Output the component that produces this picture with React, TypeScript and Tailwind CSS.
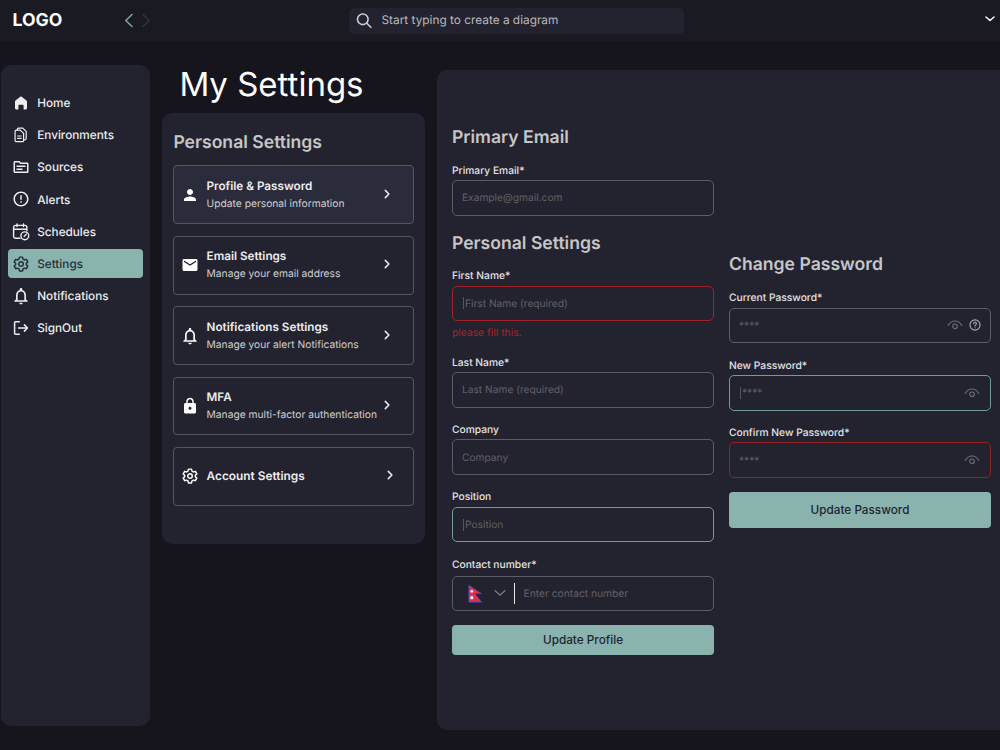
import type { ReactNode } from "react";
import {
  MdEmail,
  MdErrorOutline,
  MdLock,
  MdOutlineNotifications,
  MdOutlineTopic,
  MdPerson,
} from "react-icons/md";

function HomeIcon() {
  return (
    <svg viewBox="0 0 16 16" className="size-4" fill="currentColor">
      <path d="M8 1.2 13.2 5.2a2 2 0 0 1 .8 1.6v6.5a1.1 1.1 0 0 1-1.1 1.1h-2.3V10.6a.9.9 0 0 0-.9-.9H6.3a.9.9 0 0 0-.9.9v3.8H3.1a1.1 1.1 0 0 1-1.1-1.1V6.8a2 2 0 0 1 .8-1.6z" />
    </svg>
  );
}

function DocumentsIcon() {
  return (
    <svg viewBox="0 0 16 16" className="size-4" fill="none" stroke="currentColor" strokeWidth="1.2" strokeLinecap="round" strokeLinejoin="round">
      <path d="M3.3 3.1H7.2L10.6 6.4v7.1a1.2 1.2 0 0 1-1.2 1.2H3.3a1.2 1.2 0 0 1-1.2-1.2V4.3a1.2 1.2 0 0 1 1.2-1.2z" />
      <path d="M4.3 3V2.3A1.2 1.2 0 0 1 5.5 1.1h4.3l3.4 3.3v7.2a1.2 1.2 0 0 1-1.2 1.2h-1.2" />
      <path d="M4.6 9h3.5M4.6 11.4h3.5" />
    </svg>
  );
}

function ScheduleIcon() {
  return (
    <svg viewBox="0 0 18 18" className="size-[18px] shrink-0" fill="none" stroke="currentColor" strokeWidth="1.4" strokeLinecap="round" strokeLinejoin="round">
      <path d="M8 15.3H3.6A2 2 0 0 1 1.6 13.3V4.4a2 2 0 0 1 2-2h9.3a2 2 0 0 1 2 2v3.3M1.6 6.3h13.3M5 1v2.6M11.5 1v2.6" />
      <circle cx="12.8" cy="12.8" r="3.9" />
      <path d="m12.2 13.4 2.1-2.3" />
    </svg>
  );
}

function GearIcon() {
  return (
    <svg viewBox="0 0 24 24" className="size-4" fill="none" stroke="currentColor" strokeWidth="2.2" strokeLinejoin="round">
      <path d="M9.7 1.7h4.6l.7 3 2 1.2 3-.9 2.2 3.9-2.2 2.1v2.1l2.2 2.1-2.2 3.9-3-.9-2 1.2-.7 3H9.7l-.7-3-2-1.2-3 .9-2.2-3.9L4 13.1V11L1.8 8.9 4 5l3 .9 2-1.2z" />
      <circle cx="12" cy="12" r="3.4" />
    </svg>
  );
}

function SignOutIcon() {
  return (
    <svg viewBox="0 0 16 16" className="size-4" fill="none" stroke="currentColor" strokeWidth="1.5" strokeLinecap="round" strokeLinejoin="round">
      <path d="M6.3 1.7H2.6a1 1 0 0 0-1 1v10.6a1 1 0 0 0 1 1h3.7M5.5 8h9M11.4 4.9 14.5 8l-3.1 3.1" />
    </svg>
  );
}

function EyeIcon() {
  return (
    <svg viewBox="0 0 16 12" className="h-3 w-4" fill="none" stroke="#6c6c72" strokeWidth="1.2" strokeLinecap="round">
      <path d="M1.300 6.400C2.800 3.600 5.200 2 8 2s5.200 1.600 6.700 4.400" />
      <circle cx="8" cy="7.300" r="2.300" />
    </svg>
  );
}

function HelpIcon() {
  return (
    <svg viewBox="0 0 12 12" className="size-3" fill="none" stroke="#a9a9b4" strokeWidth="1.1" strokeLinecap="round">
      <circle cx="6" cy="6" r="5.1" />
      <path d="M4.6 4.7a1.4 1.4 0 1 1 2.1 1.2c-.5.3-.7.5-.7 1M6 8.7v.01" />
    </svg>
  );
}

function NepalFlag() {
  return (
    <svg viewBox="0 0 15 19" className="h-[19px] w-[15px]">
      <path d="M.7.9 14 9.8H7.3L14 18.3H.7z" fill="#e0304e" stroke="#2c3f98" strokeWidth="0.9" />
      <circle cx="3.8" cy="7.3" r="1.4" fill="#fff" />
      <circle cx="3.8" cy="13.7" r="1.6" fill="#fff" />
    </svg>
  );
}

function Chevron({ d, className }: { d: string; className: string }) {
  return (
    <svg viewBox="0 0 16 16" className={`shrink-0 ${className}`} fill="none" stroke="currentColor" strokeWidth="1.5" strokeLinecap="round" strokeLinejoin="round">
      <path d={d} />
    </svg>
  );
}

const navItems: { label: string; icon: ReactNode; active?: boolean }[] = [
  { label: "Home", icon: <HomeIcon /> },
  { label: "Environments", icon: <DocumentsIcon /> },
  { label: "Sources", icon: <MdOutlineTopic className="size-[18px] shrink-0" /> },
  { label: "Alerts", icon: <MdErrorOutline className="size-[18px] shrink-0" /> },
  { label: "Schedules", icon: <ScheduleIcon /> },
  { label: "Settings", icon: <GearIcon />, active: true },
  { label: "Notifications", icon: <MdOutlineNotifications className="size-[20px] shrink-0" /> },
  { label: "SignOut", icon: <SignOutIcon /> },
];

const cards: { title: string; text?: string; icon: ReactNode; active?: boolean }[] = [
  { title: "Profile & Password", text: "Update personal information", icon: <MdPerson className="size-[18px]" />, active: true },
  { title: "Email Settings", text: "Manage your email address", icon: <MdEmail className="size-[18px]" /> },
  { title: "Notifications Settings", text: "Manage your alert Notifications", icon: <MdOutlineNotifications className="size-[20px] shrink-0" /> },
  { title: "MFA", text: "Manage multi-factor authentication", icon: <MdLock className="size-[18px]" /> },
  { title: "Account Settings", icon: <GearIcon /> },
];

function Heading({ children }: { children: ReactNode }) {
  return <h2 className="h-[22px] pt-px text-[17.6px] leading-[22px] font-semibold text-[#c6c6c8]">{children}</h2>;
}

function Field({
  label,
  placeholder,
  border = "border-[#5d5d68]",
  caret = false,
  children,
}: {
  label: string;
  placeholder: string;
  border?: string;
  caret?: boolean;
  children?: ReactNode;
}) {
  return (
    <div className="flex flex-col">
      <span className="mb-[1.9px] h-4 pt-[0.5px] text-[10.25px] leading-4 font-medium text-[#e4e4e6]">{label}</span>
      <div className={`flex h-[35.5px] items-center rounded-[5px] border px-[9px] ${border}`}>
        {caret && <span className="mr-px ml-px h-3 w-px bg-[#55555b]" />}
        <span className="flex-1 pt-[2px] text-[10.2px] text-[#606065]">{placeholder}</span>
        {children}
      </div>
    </div>
  );
}

export default function App() {
  return (
    <div className="flex h-[750px] w-[1000px] flex-col overflow-hidden bg-[#16141d] font-['Inter',sans-serif] [text-rendering:geometricPrecision]">
      <header className="flex h-[41px] shrink-0 items-center bg-[#1a1a23]">
        <div className="w-[121px] pt-[2px] pl-[12.5px] text-[17.6px] font-bold text-white">LOGO</div>
        <Chevron d="M11 1.500 4.800 7.500l6.200 6" className="size-4 text-[#79aaa5]" />
        <Chevron d="M5 1.500 11.200 7.500l-6.200 6" className="ml-px size-4 text-[#33333f]" />
        <div className="ml-[195px] flex h-[26px] w-[335px] items-center rounded-[5px] bg-[#23232f] pl-[7px]">
          <svg viewBox="0 0 16 16" className="size-4" fill="none" stroke="#cfcfd1" strokeWidth="1.6" strokeLinecap="round">
            <circle cx="6.8" cy="6.3" r="5.3" />
            <path d="m10.8 10.3 4 4" />
          </svg>
          <span className="ml-[9.5px] pt-px text-[11.85px] text-[#b9b9bb]">Start typing to create a diagram</span>
        </div>
        <Chevron d="M4 4 8 7.500l4-3.500" className="mr-[2.5px] ml-auto size-4 text-white" />
      </header>

      <div className="flex flex-1">
        <nav className="mt-[23.7px] ml-px flex h-[661px] w-[149px] shrink-0 flex-col gap-[3.2px] rounded-[10px] bg-[#23232f] px-[7px] pt-[23.6px]">
          {navItems.map((item) => (
            <div
              key={item.label}
              className={`flex h-[29px] shrink-0 items-center rounded-[4px] pl-[5px] text-[11.75px] font-medium ${
                item.active ? "bg-[#8ab3ae] text-[#22303a]" : "text-[#ededef]"
              }`}
            >
              <span className="flex w-4 items-center justify-center">{item.icon}</span>
              <span className="ml-[8.2px] pt-[2px]">{item.label}</span>
            </div>
          ))}
        </nav>

        <section className="ml-3 flex w-[263px] shrink-0 flex-col">
          <h1 className="mt-[22px] ml-[17.4px] h-[50px] text-[33px] leading-[42px] whitespace-nowrap text-white">My Settings</h1>
          <div className="flex h-[430.5px] flex-col rounded-[10px] bg-[#23232f] px-[11.4px] pt-[18.4px]">
            <Heading>Personal Settings</Heading>
            <div className="mt-[12.1px] flex flex-col gap-[11.7px]">
              {cards.map((card) => (
                <div
                  key={card.title}
                  className={`flex h-[58.7px] items-center rounded-[4px] border border-[#55555b] pl-[6.6px] ${card.active ? "bg-[#2b2c3b]" : ""}`}
                >
                  <span className="flex w-[18px] justify-center text-white">{card.icon}</span>
                  <div className="ml-[7.6px] w-[172px] whitespace-nowrap">
                    <div className={`leading-[18px] font-semibold text-[#ededef] ${card.text ? "text-[11.7px]" : "text-[11.85px]"}`}>
                      {card.title}
                    </div>
                    {card.text && <div className="text-[10.25px] leading-[18px] text-[#cfcfd2]">{card.text}</div>}
                  </div>
                  <Chevron
                    d="M6.300 3.400 9.900 7 6.300 10.600"
                    className={`size-4 text-[#ededef] ${card.text ? "" : "ml-[3.7px]"}`}
                  />
                </div>
              ))}
            </div>
          </div>
        </section>

        <main className="mt-[28.5px] ml-3 flex h-[660.5px] w-[575px] shrink-0 rounded-[10px] bg-[#23232f] pl-[15px]">
          <div className="flex w-[262px] flex-col pt-[56.5px]">
            <Heading>Primary Email</Heading>
            <div className="mt-[14.3px]">
              <Field label="Primary Email*" placeholder="Example@gmail.com" />
            </div>
            <div className="mt-[16px]">
              <Heading>Personal Settings</Heading>
            </div>
            <div className="mt-[14px]">
              <Field label="First Name*" placeholder="First Name (required)" border="border-[#a32227]" caret />
            </div>
            <span className="mt-[4px] h-4 text-[10.3px] leading-4 text-[#ab2127]">please fill this.</span>
            <div className="mt-[13.1px] flex flex-col gap-[14px]">
              <Field label="Last Name*" placeholder="Last Name (required)" />
              <Field label="Company" placeholder="Company" />
              <Field label="Position" placeholder="Position" border="border-[#6f9c98]" caret />
              <div className="flex flex-col">
                <span className="mb-[3.2px] h-4 pt-[0.5px] text-[10.25px] leading-4 font-medium text-[#e4e4e6]">Contact number*</span>
                <div className="flex h-[35.5px] items-center rounded-[5px] border border-[#5d5d68] pl-[14.5px]">
                  <NepalFlag />
                  <Chevron d="M3 5.800 8 10l5-4.200" className="ml-[9.5px] size-4 text-[#77777c]" />
                  <span className="ml-[5.5px] h-[21px] w-px bg-[#e4e4e6]" />
                  <span className="ml-[9px] pt-[2px] text-[10.25px] text-[#606065]">Enter contact number</span>
                </div>
              </div>
            </div>
            <button className="mt-[14.2px] h-[29.5px] shrink-0 rounded-[4px] bg-[#8ab3ae] pt-[1.5px] text-[11.75px] font-medium text-[#1d2530]">
              Update Profile
            </button>
          </div>

          <div className="ml-[15px] flex w-[262px] flex-col pt-[183.8px]">
            <Heading>Change Password</Heading>
            <div className="mt-[14.5px] flex flex-col gap-[14px]">
              <Field label="Current Password*" placeholder="****">
                <EyeIcon />
                <span className="ml-[6px]">
                  <HelpIcon />
                </span>
              </Field>
              <Field label="New Password*" placeholder="****" border="border-[#6f9c98]" caret>
                <span className="mr-px">
                  <EyeIcon />
                </span>
              </Field>
              <Field label="Confirm New Password*" placeholder="****" border="border-[#94201f]">
                <span className="mr-px">
                  <EyeIcon />
                </span>
              </Field>
            </div>
            <button className="mt-[14.2px] h-[35.5px] shrink-0 rounded-[4px] bg-[#8ab3ae] pt-[1.5px] text-[11.75px] font-medium text-[#1d2530]">
              Update Password
            </button>
          </div>
        </main>
      </div>
    </div>
  );
}
